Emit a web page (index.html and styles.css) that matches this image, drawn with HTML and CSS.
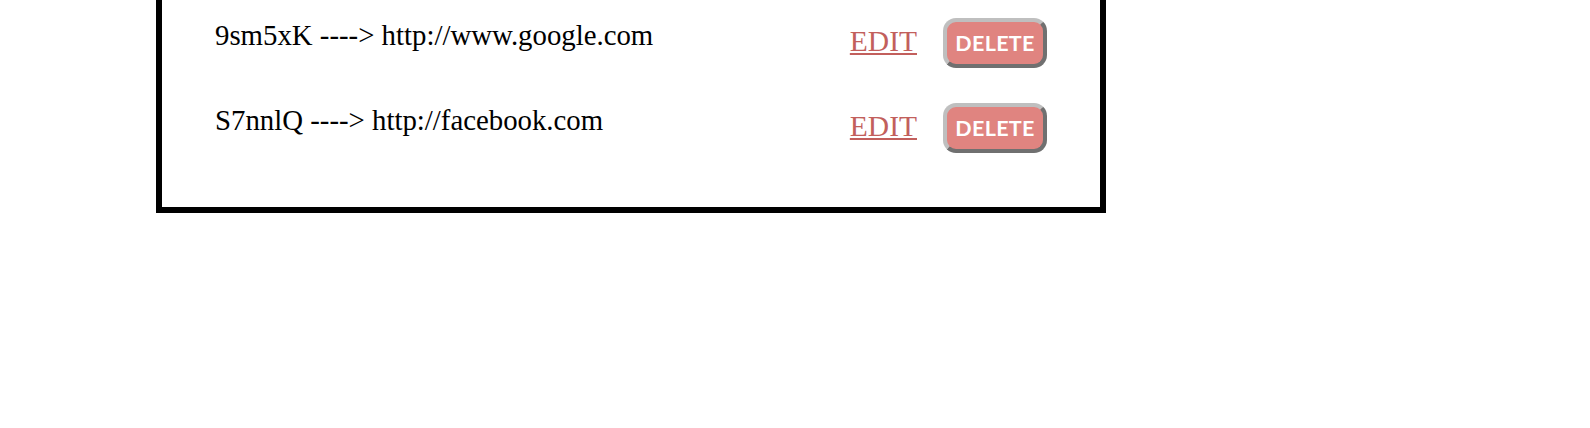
FILE: index.html
```html
<!DOCTYPE html>
<html>
<head>
<meta charset="utf-8">
<link rel="stylesheet" href="styles.css">
</head>
<body>
<div class="panel">
  <ul class="links">
    <li class="link-row">
      <span class="mapping">9sm5xK ----&gt; http://www.google.com</span>
      <div class="actions">
        <a class="edit" href="#">EDIT</a>
        <button class="delete">DELETE</button>
      </div>
    </li>
    <li class="link-row">
      <span class="mapping">S7nnlQ ----&gt; http://facebook.com</span>
      <div class="actions">
        <a class="edit" href="#">EDIT</a>
        <button class="delete">DELETE</button>
      </div>
    </li>
  </ul>
</div>
</body>
</html>
```

FILE: styles.css
```css
html, body {
  margin: 0;
  padding: 0;
  background: #ffffff;
}

body {
  font-family: "Liberation Serif", "Times New Roman", serif;
  color: #000;
}

.panel {
  width: 950px;
  margin-left: 156px;
  border: 6px solid #000;
  border-top: none;
  padding: 0 53px 37px 53px;
  box-sizing: border-box;
}

.links {
  list-style: none;
  margin: 0;
  padding: 0;
}

.link-row {
  display: flex;
  align-items: center;
  justify-content: space-between;
  height: 85px;
}

.mapping {
  font-size: 28.8px;
  line-height: 1;
  margin-bottom: 14px;
}

.actions {
  display: flex;
  align-items: center;
  gap: 26px;
}

.edit {
  font-size: 29.5px;
  color: #c25f5c;
  text-decoration: underline;
  line-height: 1;
  margin-bottom: 2px;
}

.delete {
  width: 104px;
  height: 50px;
  box-sizing: border-box;
  background: #e08480;
  color: #fff;
  font-family: "Lato", "Liberation Sans", sans-serif;
  font-weight: 700;
  font-size: 21.5px;
  border: 4px solid;
  border-color: #bfbfbf #707070 #707070 #bfbfbf;
  border-radius: 13px;
  padding: 0;
  letter-spacing: 0.3px;
}
```
